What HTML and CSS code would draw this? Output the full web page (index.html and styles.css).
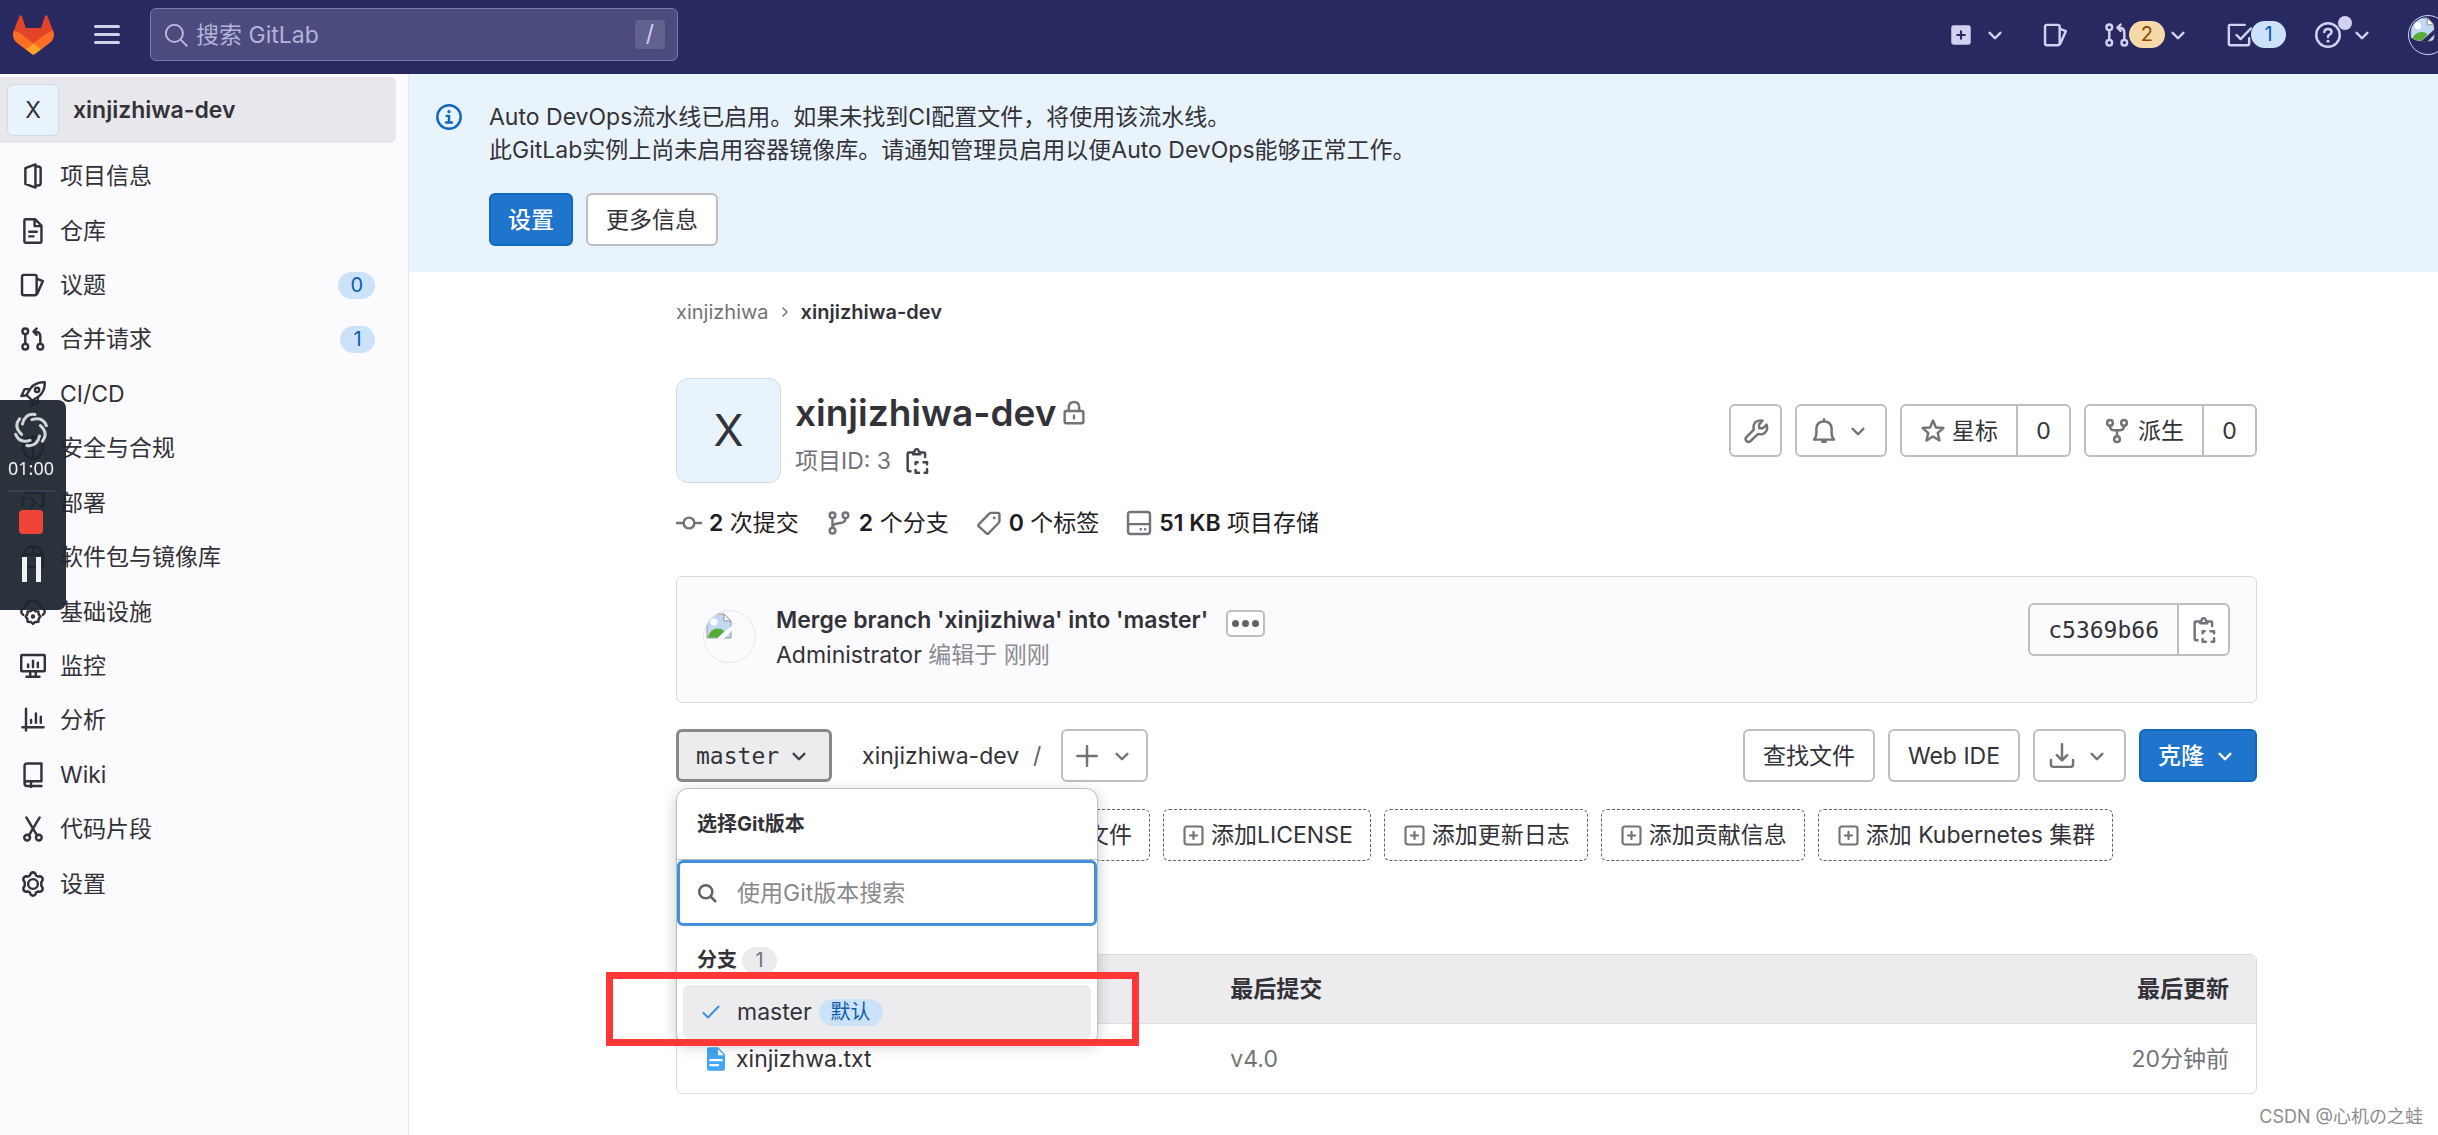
FILE: index.html
```html
<!DOCTYPE html>
<html lang="zh-CN">
<head>
<meta charset="utf-8">
<meta name="viewport" content="width=device-width, initial-scale=1">
<title>xinjizhiwa-dev · GitLab</title>
<link rel="stylesheet" href="styles.css">
</head>
<body>
<svg class="sprite" aria-hidden="true">
  <symbol id="chevron" viewBox="0 0 16 16"><path d="M4.7 6.7 8 10l3.300-3.300"/></symbol>
  <symbol id="chevron-right" viewBox="0 0 16 16"><path d="M6 4l4 4-4 4"/></symbol>
  <symbol id="search" viewBox="0 0 16 16"><circle cx="7" cy="7" r="5.250"/><path d="M11 11l3.600 3.600"/></symbol>
  <symbol id="plus-solid" viewBox="0 0 16 16"><rect x="2" y="2" width="12" height="12" rx="1.500" fill="currentColor" stroke="none"/><path d="M8 5.700v4.600M5.700 8h4.600" stroke="#292961" stroke-width="1.300"/></symbol>
  <symbol id="plus-square" viewBox="0 0 16 16"><rect x="1.750" y="1.750" width="12.500" height="12.500" rx="1.500"/><path d="M8 5.500v5M5.500 8h5"/></symbol>
  <symbol id="plus" viewBox="0 0 16 16"><path d="M8 2v12M2 8h12"/></symbol>
  <symbol id="issues" viewBox="0 0 16 16"><rect x="1.250" y="1.750" width="9" height="12.500" rx="1.200"/><path d="M10.500 4.200l3.600 1.400-3.400 7.600"/></symbol>
  <symbol id="merge" viewBox="0 0 16 16"><circle cx="3.250" cy="3.250" r="1.750"/><circle cx="3.250" cy="12.750" r="1.750"/><circle cx="12.500" cy="12.750" r="1.750"/><path d="M3.250 5v6M12.500 11V6.500q0-3-3-3H8.500M10.200 1.600 8.300 3.500l1.900 1.900"/></symbol>
  <symbol id="todo" viewBox="0 0 16 16"><path d="M11.500 1.750H2.500q-.75 0-.75.75v11q0 .75.75.75h11q.75 0 .75-.75V10M6.500 8l2.500 2.500L15.300 4"/></symbol>
  <symbol id="help" viewBox="0 0 16 16"><circle cx="8" cy="8" r="7.250"/><path d="M5.700 6.200q.3-1.900 2.300-1.900 2.200 0 2.200 1.900 0 1.100-1.200 1.600-1 .4-1 1.500"/><circle cx="8" cy="11.800" r=".9" fill="currentColor" stroke="none"/></symbol>
  <symbol id="project" viewBox="0 0 16 16"><path d="M9.500.9v14.200L3.300 12.900V3.100zM9.500 2.200h1.600q1.600 0 1.600 1.500v8.600q0 1.500-1.600 1.500H9.500"/></symbol>
  <symbol id="doc" viewBox="0 0 16 16"><path d="M3.500.750h5.700l4 4v9.750q0 .75-.75.75h-9q-.75 0-.75-.75V1.500q0-.75.75-.75zM9 1v4h4M5.700 8.500h4.600M5.700 11.300h2.600"/></symbol>
  <symbol id="rocket" viewBox="0 0 16 16"><path d="M15.200.8q-5.700-.3-8.700 3.700L4 8.500 7.500 12l4-2.500q4-3 3.700-8.700zM6 5H2.800L.9 9.300 4 8.800M11 10v3.200L6.700 15.100 7.200 12"/><circle cx="10.500" cy="5.500" r="1.300"/></symbol>
  <symbol id="shield" viewBox="0 0 16 16"><path d="M8 .9 14 3v4.500q0 5-6 7.700-6-2.700-6-7.700V3zM8 1v14"/></symbol>
  <symbol id="deploy" viewBox="0 0 16 16"><path d="M3.500 1.500h9q2 0 2 2V10H12M1.500 10V5H4M7 5.500l2.500 2.500L7 10.500M3 14h10"/></symbol>
  <symbol id="package" viewBox="0 0 16 16"><path d="M1.750 6.500 5 1.750h6l3.250 4.750v6.750q0 1-1 1H2.750q-1 0-1-1zM1.750 6.500h12.500M8 1.750V6.500"/></symbol>
  <symbol id="cloud-gear" viewBox="0 0 16 16"><path d="M2 9.800Q.8 9.200.8 7.800q0-2 2.400-2.500Q4 .9 8 .9t4.800 4.400q2.400.5 2.400 2.500 0 1.400-1.200 2"/><path d="M8 6.200l1.400 1.300 1.900.1.200 1.800 1 1.400-1 1.400-.2 1.800-1.900.1L8 15.300l-1.400-1.200-1.900-.1-.2-1.800-1-1.400 1-1.400.2-1.800 1.900-.1z"/><circle cx="8" cy="10.800" r=".6" fill="currentColor"/></symbol>
  <symbol id="monitor" viewBox="0 0 16 16"><rect x=".75" y="1.250" width="14.500" height="10" rx=".5"/><path d="M6.300 11.500v3M9.700 11.500v3M4 14.600h8M5 7v1.700M8 4.700v4M11 6v2.700"/></symbol>
  <symbol id="chart" viewBox="0 0 16 16"><path d="M3.700 1v13.500M1.500 12.500h13M6.800 8v1.700M9.800 4v5.700M12.800 6v3.700"/></symbol>
  <symbol id="book" viewBox="0 0 16 16"><path d="M4.500.9h8.700v11H4.300q-1.500 0-1.500 1.400 0 1.500 1.500 1.500h8.900M2.800 13.200V2.500q0-1.600 1.700-1.600M6.800 12.500v3"/></symbol>
  <symbol id="scissors" viewBox="0 0 16 16"><circle cx="4.400" cy="13.300" r="1.800"/><circle cx="11.600" cy="13.300" r="1.800"/><path d="M3.900.9l6.600 11M12.100.9l-6.600 11"/></symbol>
  <symbol id="gear" viewBox="0 0 16 16"><path d="M6.600 1.500Q8 .2 9.400 1.500l.5 1.300 1 .6 1.500-.2q1.800.6 1.500 2.500l-.8 1.200v2.200l.8 1.200q.3 1.900-1.500 2.500l-1.500-.2-1 .6-.5 1.300Q8 15.800 6.600 14.500l-.5-1.300-1-.6-1.500.2q-1.800-.6-1.500-2.500l.8-1.200V6.900l-.8-1.200q-.3-1.900 1.500-2.500l1.500.2 1-.6z"/><circle cx="8" cy="8" r="3"/></symbol>
  <symbol id="info" viewBox="0 0 16 16"><circle cx="8" cy="8" r="7.200"/><path d="M6.500 7.300H8v4M6.200 11.400h3.600"/><circle cx="8" cy="4.700" r="1" fill="currentColor" stroke="none"/></symbol>
  <symbol id="lock" viewBox="0 0 16 16"><rect x="2.250" y="6.750" width="11.500" height="7.500" rx="1"/><path d="M4.800 6.500V4.500q0-3.300 3.200-3.300t3.200 3.300v2M8 9.700v1.600"/></symbol>
  <symbol id="copy" viewBox="0 0 16 16"><path d="M4.500 2.750h-1.500q-.75 0-.75.75v10q0 .75.75.75h1M11 2.750h1.250q.75 0 .75.75v2"/><path d="M5.600 3.900V2.500L6.500 2.200q.2-1.500 1.300-1.500t1.300 1.500l.9.300v1.400z"/><path d="M7.150 10V8.750H8.400M12 8.750h2.200V10M14.200 13v2.200h-1.500M9.200 15.200H7.150V13.500"/></symbol>
  <symbol id="commit" viewBox="0 0 16 16"><circle cx="8" cy="8" r="3.300"/><path d="M.5 8h4M11.500 8h4"/></symbol>
  <symbol id="branch" viewBox="0 0 16 16"><circle cx="4" cy="3.250" r="1.750"/><circle cx="12" cy="3.250" r="1.750"/><circle cx="4" cy="12.750" r="1.750"/><path d="M4 5v6M12 5q0 2.500-3 3L6 8.500q-2 .5-2 2.500"/></symbol>
  <symbol id="tag" viewBox="0 0 16 16"><path d="M9.200 1.750h4.300q.9 0 .9.900v4.200q0 .6-.4 1l-6.300 6.500q-.6.6-1.200 0L1.700 10.100q-.6-.6 0-1.200l6.500-6.700q.4-.45 1-.45z"/><circle cx="11.200" cy="4.900" r=".9" fill="currentColor" stroke="none"/></symbol>
  <symbol id="disk" viewBox="0 0 16 16"><rect x="1.250" y="1.250" width="13.500" height="13.500" rx="1.500"/><path d="M1.500 8.700h13M9 11.800h.1M11.700 11.800h.1"/></symbol>
  <symbol id="wrench" viewBox="0 0 16 16"><path d="M10 6.300l2.300 0 2.200-2.200q1.100 3.300-1 5-1.800 1.500-4.200.7l-4.800 4.500q-1.300 1-2.400-.2-1.100-1.200 0-2.300l4.600-4.700Q5.900 4.700 7.400 2.900q1.900-2 4.600-1.200L9.900 3.900z"/></symbol>
  <symbol id="bell" viewBox="0 0 16 16"><path d="M1.800 13.300Q3.300 12 3.300 9V6.500Q3.600 2.200 8 2.200t4.700 4.300V9q0 3 1.500 4.300zM8 .8v1.400M7 14.700h2"/></symbol>
  <symbol id="star" viewBox="0 0 16 16"><path d="M8 1.600l1.800 4.200 4.600.4-3.500 3 1.100 4.600L8 11.400l-4 2.400 1.100-4.600-3.500-3 4.600-.4z"/></symbol>
  <symbol id="fork" viewBox="0 0 16 16"><circle cx="3.700" cy="3" r="1.750"/><circle cx="12.300" cy="3" r="1.750"/><circle cx="8" cy="13" r="1.750"/><path d="M3.700 4.800q0 2.700 2.300 2.700h4q2.300 0 2.300-2.700M8 7.600v3.600"/></symbol>
  <symbol id="download" viewBox="0 0 16 16"><path d="M8 .8v9.700M4.800 7.500 8 10.700l3.200-3.200M1.200 10.500v2.800q0 1.400 1.400 1.400h10.800q1.400 0 1.400-1.400v-2.800"/></symbol>
  <symbol id="check" viewBox="0 0 16 16"><path d="M2.500 8.700l3.300 3.300 7.700-8"/></symbol>
  <symbol id="file" viewBox="0 0 16 16"><path d="M2 1.500Q2 .2 3.300.2H9.500L14 5v9.500q0 1.300-1.300 1.300H3.300Q2 15.800 2 14.500z" fill="#42a5f5" stroke="none"/><path d="M9.300 1.300v4.200h4" fill="#fff" stroke="none"/><path d="M4.200 8.800h7.600M4.200 12h5.300" stroke="#fff"/></symbol>
  <symbol id="broken" viewBox="0 0 26 26"><path d="M1 1h17l7 7v17H1z" fill="#c3d9f3" stroke="#9a9a9a"/><path d="M18 1v7h7z" fill="#fff" stroke="#8f8f8f"/><circle cx="8" cy="9" r="3.500" fill="#fff" stroke="none"/><path d="M2 24.500q2-9 10-9 5 0 6 3l-6 6z" fill="#57ab36" stroke="none"/><path d="M11 25.800 26 12.500v5L18 25.800z" fill="var(--gap)" stroke="none"/></symbol>
</svg>

<header class="topbar">
  <a class="brand" href="#" aria-label="GitLab">
    <svg viewBox="0 0 25 24"><path d="m24.507 9.500-.034-.09L21.082.562a.896.896 0 0 0-1.694.091l-2.290 7.010H7.825L5.535.653a.898.898 0 0 0-1.694-.09L.451 9.411.416 9.500a6.297 6.297 0 0 0 2.090 7.278l.012.010.030.022 5.160 3.867 2.560 1.935 1.554 1.176a1.051 1.051 0 0 0 1.268 0l1.555-1.176 2.560-1.935 5.197-3.890.014-.010A6.297 6.297 0 0 0 24.507 9.500Z" fill="#e24329"/><path d="m24.507 9.500-.034-.09a11.440 11.440 0 0 0-4.560 2.051l-7.447 5.632 4.742 3.584 5.197-3.890.014-.010A6.297 6.297 0 0 0 24.507 9.500Z" fill="#fc6d26"/><path d="m7.707 20.677 2.560 1.935 1.555 1.176a1.051 1.051 0 0 0 1.268 0l1.555-1.176 2.560-1.935-4.743-3.584-4.755 3.584Z" fill="#fca326"/><path d="M5.010 11.461a11.430 11.430 0 0 0-4.560-2.050L.416 9.500a6.297 6.297 0 0 0 2.090 7.278l.012.010.030.022 5.160 3.867 4.745-3.584-7.444-5.632Z" fill="#fc6d26"/></svg>
  </a>
  <button class="burger" aria-label="菜单"><span></span><span></span><span></span></button>
  <div class="global-search">
    <svg class="icon"><use href="#search"/></svg>
    <input type="text" placeholder="搜索 GitLab" aria-label="搜索 GitLab">
    <kbd>/</kbd>
  </div>
  <nav class="top-actions" aria-label="快捷入口">
    <button class="top-btn spaced" aria-label="新建"><svg class="icon"><use href="#plus-solid"/></svg><svg class="icon"><use href="#chevron"/></svg></button>
    <a class="top-btn" href="#" aria-label="议题"><svg class="icon"><use href="#issues"/></svg></a>
    <button class="top-btn" aria-label="合并请求"><svg class="icon"><use href="#merge"/></svg><span class="badge warn">2</span><svg class="icon"><use href="#chevron"/></svg></button>
    <a class="top-btn" href="#" aria-label="待办事项"><svg class="icon"><use href="#todo"/></svg><span class="badge">1</span></a>
    <button class="top-btn spaced help" aria-label="帮助"><svg class="icon"><use href="#help"/></svg><i class="dot"></i><svg class="icon"><use href="#chevron"/></svg></button>
    <a class="me" href="#" aria-label="用户"><svg class="avatar-broken"><use href="#broken"/></svg></a>
  </nav>
</header>

<div class="layout">
  <aside class="sidebar">
    <a class="side-project" href="#"><span class="tile">X</span>xinjizhiwa-dev</a>
    <nav aria-label="项目导航">
      <ul class="side-list">
        <li><a href="#"><svg class="icon"><use href="#project"/></svg>项目信息</a></li>
        <li><a href="#"><svg class="icon"><use href="#doc"/></svg>仓库</a></li>
        <li><a href="#"><svg class="icon"><use href="#issues"/></svg>议题<span class="badge">0</span></a></li>
        <li><a href="#"><svg class="icon"><use href="#merge"/></svg>合并请求<span class="badge">1</span></a></li>
        <li><a href="#"><svg class="icon"><use href="#rocket"/></svg>CI/CD</a></li>
        <li><a href="#"><svg class="icon"><use href="#shield"/></svg>安全与合规</a></li>
        <li><a href="#"><svg class="icon"><use href="#deploy"/></svg>部署</a></li>
        <li><a href="#"><svg class="icon"><use href="#package"/></svg>软件包与镜像库</a></li>
        <li><a href="#"><svg class="icon"><use href="#cloud-gear"/></svg>基础设施</a></li>
        <li><a href="#"><svg class="icon"><use href="#monitor"/></svg>监控</a></li>
        <li><a href="#"><svg class="icon"><use href="#chart"/></svg>分析</a></li>
        <li><a href="#"><svg class="icon"><use href="#book"/></svg>Wiki</a></li>
        <li><a href="#"><svg class="icon"><use href="#scissors"/></svg>代码片段</a></li>
        <li><a href="#"><svg class="icon"><use href="#gear"/></svg>设置</a></li>
      </ul>
    </nav>
  </aside>

  <main class="main">
    <section class="alert">
      <svg class="icon"><use href="#info"/></svg>
      <div>
        <p>Auto DevOps流水线已启用。如果未找到CI配置文件，将使用该流水线。<br>此GitLab实例上尚未启用容器镜像库。请通知管理员启用以便Auto DevOps能够正常工作。</p>
        <div class="row">
          <button class="btn primary">设置</button>
          <button class="btn">更多信息</button>
        </div>
      </div>
    </section>

    <div class="content">
      <nav class="crumbs" aria-label="面包屑"><a href="#">xinjizhiwa</a><svg class="icon"><use href="#chevron-right"/></svg><a class="current" href="#">xinjizhiwa-dev</a></nav>

      <div class="project-head">
        <span class="project-tile">X</span>
        <div class="project-name">
          <h1>xinjizhiwa-dev <svg class="icon"><use href="#lock"/></svg></h1>
          <p>项目ID: 3 <button class="bare" aria-label="复制项目ID"><svg class="icon"><use href="#copy"/></svg></button></p>
        </div>
        <div class="row project-actions">
          <button class="btn square" aria-label="管理"><svg class="icon"><use href="#wrench"/></svg></button>
          <button class="btn notify" aria-label="通知"><svg class="icon"><use href="#bell"/></svg><svg class="icon"><use href="#chevron"/></svg></button>
          <div class="group"><button class="btn"><svg class="icon"><use href="#star"/></svg>星标</button><a class="btn count" href="#">0</a></div>
          <div class="group"><button class="btn fork"><svg class="icon"><use href="#fork"/></svg>派生</button><a class="btn count" href="#">0</a></div>
        </div>
      </div>

      <nav class="stats" aria-label="统计">
        <a href="#"><svg class="icon"><use href="#commit"/></svg><span><b>2</b> 次提交</span></a>
        <a href="#"><svg class="icon"><use href="#branch"/></svg><span><b>2</b> 个分支</span></a>
        <a href="#"><svg class="icon"><use href="#tag"/></svg><span><b>0</b> 个标签</span></a>
        <a href="#"><svg class="icon"><use href="#disk"/></svg><span><b>51 KB</b> 项目存储</span></a>
      </nav>

      <section class="commit">
        <span class="commit-avatar"><svg><use href="#broken"/></svg></span>
        <div class="commit-text">
          <div class="row"><a class="commit-title" href="#">Merge branch 'xinjizhiwa' into 'master'</a><button class="more" aria-label="展开提交描述"><i></i><i></i><i></i></button></div>
          <p><a href="#">Administrator</a> 编辑于 刚刚</p>
        </div>
        <div class="group sha"><span class="btn mono">c5369b66</span><button class="btn" aria-label="复制提交SHA"><svg class="icon"><use href="#copy"/></svg></button></div>
      </section>

      <div class="tree-bar">
        <div class="ref-picker">
          <button class="btn mono ref-btn" aria-expanded="true">master<svg class="icon"><use href="#chevron"/></svg></button>
          <div class="menu">
            <h2>选择Git版本</h2>
            <div class="menu-search">
              <svg class="icon"><use href="#search"/></svg>
              <input type="text" placeholder="使用Git版本搜索" aria-label="使用Git版本搜索">
            </div>
            <h3>分支<span class="badge muted">1</span></h3>
            <button class="menu-item"><svg class="icon"><use href="#check"/></svg>master<span class="badge">默认</span></button>
            <div class="marker"></div>
          </div>
        </div>
        <div class="path"><a href="#">xinjizhiwa-dev</a><span>/</span></div>
        <button class="btn add" aria-label="添加"><svg class="icon"><use href="#plus"/></svg><svg class="icon"><use href="#chevron"/></svg></button>
        <div class="row tree-actions">
          <button class="btn">查找文件</button>
          <button class="btn">Web IDE</button>
          <button class="btn down" aria-label="下载"><svg class="icon"><use href="#download"/></svg><svg class="icon"><use href="#chevron"/></svg></button>
          <button class="btn primary clone">克隆<svg class="icon"><use href="#chevron"/></svg></button>
        </div>
      </div>

      <div class="row suggestions">
        <a class="btn dashed" href="#"><svg class="icon"><use href="#plus-square"/></svg>添加自述文件</a>
        <a class="btn dashed" href="#"><svg class="icon"><use href="#plus-square"/></svg>添加LICENSE</a>
        <a class="btn dashed" href="#"><svg class="icon"><use href="#plus-square"/></svg>添加更新日志</a>
        <a class="btn dashed" href="#"><svg class="icon"><use href="#plus-square"/></svg>添加贡献信息</a>
        <a class="btn dashed" href="#"><svg class="icon"><use href="#plus-square"/></svg>添加 Kubernetes 集群</a>
      </div>

      <table class="files">
        <thead><tr><th scope="col" aria-label="名称"></th><th scope="col">最后提交</th><th scope="col">最后更新</th></tr></thead>
        <tbody><tr><td><a href="#"><svg class="icon"><use href="#file"/></svg>xinjizhwa.txt</a></td><td>v4.0</td><td>20分钟前</td></tr></tbody>
      </table>
    </div>
  </main>
</div>

<aside class="recorder" aria-label="录屏">
  <svg class="swirl" viewBox="0 0 36 36"><path d="M22 2.500Q12 1 9.500 12"/><path d="M22 2.500Q12 1 9.500 12" transform="rotate(60 18 18)"/><path d="M22 2.500Q12 1 9.500 12" transform="rotate(120 18 18)"/><path d="M22 2.500Q12 1 9.500 12" transform="rotate(180 18 18)"/><path d="M22 2.500Q12 1 9.500 12" transform="rotate(240 18 18)"/><path d="M22 2.500Q12 1 9.500 12" transform="rotate(300 18 18)"/></svg>
  <time>01:00</time>
  <button class="stop" aria-label="停止"></button>
  <button class="pause" aria-label="暂停"></button>
</aside>
<div class="watermark">CSDN @心机の之蛙</div>
</body>
</html>
```
FILE: styles.css
```css
* { box-sizing: border-box; }

body {
  margin: 0;
  min-height: 100vh;
  display: flex;
  flex-direction: column;
  position: relative;
  overflow-x: hidden;
  background: #fff;
  color: #333238;
  font: 400 23px/34px Inter, "Noto Sans CJK SC", sans-serif;
}

a { color: inherit; text-decoration: none; }
p, h1, h2, h3, ul { margin: 0; padding: 0; }
button, input { font: inherit; color: inherit; }
button { cursor: pointer; }
i { font-style: normal; }
b { font-weight: 600; }

.sprite { position: absolute; width: 0; height: 0; }

.icon {
  width: 26px;
  height: 26px;
  flex: none;
  fill: none;
  stroke: currentColor;
  stroke-width: 1.5;
  stroke-linecap: round;
  stroke-linejoin: round;
}

.row { display: flex; align-items: center; gap: 13px; }

.badge {
  min-width: 35px;
  padding: 0 12px;
  border-radius: 14px;
  background: #cbe2f9;
  color: #0b5cad;
  font-size: 20px;
  line-height: 27px;
  text-align: center;
}
.badge.warn { background: #f5d9a8; color: #8f4700; }
.badge.muted { background: #ececef; color: #737278; font-weight: 400; }

/* Top bar */
.topbar {
  display: flex;
  align-items: center;
  height: 74px;
  padding: 0 0 5px 13px;
  background: #292961;
  color: #d1d1f0;
}
.brand { display: flex; }
.brand svg { width: 41px; height: 40px; }
.burger {
  display: flex;
  flex-direction: column;
  gap: 5px;
  width: 26px;
  margin: 0 30px 0 40px;
  padding: 0;
  border: 0;
  background: none;
}
.burger span { height: 3px; border-radius: 2px; background: #d1d1f0; }
.global-search {
  display: flex;
  align-items: center;
  gap: 7px;
  width: 528px;
  height: 53px;
  padding: 0 12px;
  border: 1px solid #7979a8;
  border-radius: 6px;
  background: #4b4b7e;
}
.global-search .icon { color: #b8b8dc; stroke-width: 1.2; }
.global-search input {
  flex: 1;
  min-width: 0;
  padding: 0;
  border: 0;
  outline: 0;
  background: none;
}
.global-search input::placeholder { color: #b4b4d8; opacity: 1; }
.global-search kbd {
  width: 30px;
  border-radius: 4px;
  background: #62628f;
  font: inherit;
  line-height: 29px;
  text-align: center;
}
.top-actions { display: flex; align-items: center; gap: 35px; margin-left: auto; }
.top-btn {
  display: flex;
  align-items: center;
  padding: 0;
  border: 0;
  background: none;
}
.top-btn.spaced { gap: 8px; }
.top-btn .badge { margin-left: -1px; }
.help { position: relative; margin-left: -6px; }
.dot {
  position: absolute;
  left: 22px;
  top: -7px;
  width: 16px;
  height: 16px;
  border: 1px solid #292961;
  border-radius: 50%;
  background: #d1d1f0;
}
.me {
  --gap: #292961;
  width: 30px;
  height: 40px;
  margin-left: -2px;
  overflow: hidden;
}
.avatar-broken {
  width: 40px;
  height: 40px;
  padding: 1px 12px 12px 1px;
  border: 1px solid #d1d1f0;
  border-radius: 50%;
}

/* Sidebar */
.layout { display: flex; flex: 1; }
.sidebar {
  flex: none;
  width: 409px;
  padding-top: 3px;
  border-right: 1px solid #e6e5eb;
  background: #fbfafd;
}
.side-project {
  display: flex;
  align-items: center;
  gap: 14px;
  height: 66px;
  margin: 0 12px 6px 0;
  padding-left: 7px;
  border-radius: 0 6px 6px 0;
  background: #e8e7ec;
  font-weight: 600;
}
.tile {
  width: 52px;
  border: 1px solid #d0dbe6;
  border-radius: 6px;
  background: #e9f3fc;
  font-weight: 400;
  line-height: 50px;
  text-align: center;
}
.side-list {
  display: grid;
  grid-auto-rows: 1fr;
  min-height: 762px;
  list-style: none;
}
.side-list li { display: grid; }
.side-list a {
  display: flex;
  align-items: center;
  gap: 14px;
  padding: 0 33px 0 20px;
}
.side-list .badge { margin-left: auto; }

/* Alert */
.main { flex: 1; min-width: 0; }
.alert {
  display: flex;
  gap: 27px;
  padding: 27px 27px 26px;
  background: #e9f3fc;
}
.alert > .icon { margin-top: 3px; color: #1068bf; }
.alert p { margin-bottom: 26px; line-height: 33px; }

/* Buttons */
.btn {
  display: inline-flex;
  align-items: center;
  justify-content: center;
  gap: 6px;
  height: 53px;
  padding: 0 18px;
  border: 2px solid #bfbfc3;
  border-radius: 6px;
  background: #fff;
  white-space: nowrap;
}
.btn .icon { color: #737278; }
.btn.primary { padding: 0 17px; border-color: #1068bf; background: #1f75cb; color: #fff; font-weight: 500; }
.btn.primary .icon { color: #fff; }
.btn.square { width: 53px; padding: 0; }
.mono { font-family: "DejaVu Sans Mono", monospace; }
.group { display: flex; }
.group .btn:first-child { border-radius: 6px 0 0 6px; }
.group .btn:last-child { margin-left: -2px; border-radius: 0 6px 6px 0; }
.group .fork { gap: 8px; }
.bare { padding: 0; border: 0; background: none; }

/* Project header */
.content { padding: 26px 181px 41px 267px; }
.crumbs {
  display: flex;
  align-items: center;
  gap: 8px;
  font-size: 20px;
  line-height: 28px;
  color: #737278;
}
.crumbs .icon { width: 16px; height: 16px; }
.crumbs .current { color: #333238; font-weight: 600; }
.project-head { display: flex; align-items: center; gap: 14px; margin-top: 52px; }
.project-tile {
  width: 105px;
  border: 1px solid #d0dbe6;
  border-radius: 12px;
  background: #e9f3fc;
  font-size: 44px;
  line-height: 103px;
  text-align: center;
}
.project-name { padding-top: 6px; }
.project-name h1 {
  display: flex;
  align-items: center;
  gap: 5px;
  font-size: 37px;
  font-weight: 600;
  line-height: 48px;
}
.project-name .icon { color: #737278; }
.project-name p { display: flex; align-items: center; gap: 13px; margin-top: 7px; color: #737278; }
.bare .icon { display: block; color: #434248; }
.project-actions { margin-left: auto; }
.notify { width: 92px; gap: 8px; padding: 0; }
.group .count { width: 55px; padding: 0; }
.stats { display: flex; gap: 27px; margin-top: 23px; color: #1f1e24; }
.stats a { display: flex; align-items: center; gap: 7px; }
.stats .icon { color: #737278; }

/* Last commit */
.commit {
  display: flex;
  align-items: flex-start;
  gap: 20px;
  min-height: 127px;
  margin-top: 36px;
  padding: 26px;
  border: 1px solid #dcdcde;
  border-radius: 6px;
  background: #fbfafd;
}
.commit-avatar {
  --gap: #fbfafd;
  width: 53px;
  height: 53px;
  margin-top: 7px;
  padding: 2px;
  border: 1px solid #e6e5eb;
  border-radius: 50%;
  overflow: hidden;
}
.commit-avatar svg { display: block; width: 26px; height: 26px; }
.commit-text { flex: 1; color: #8c8b91; }
.commit-text p { margin-top: 1px; }
.commit-text a { color: #333238; }
.commit-text .commit-title { font-weight: 600; }
.commit-text .row { gap: 18px; align-items: flex-end; }
.more {
  display: flex;
  align-items: center;
  justify-content: center;
  gap: 3px;
  width: 39px;
  height: 27px;
  padding: 0;
  border: 2px solid #bfbfc3;
  border-radius: 5px;
  background: #fff;
}
.more i { width: 7px; height: 7px; border-radius: 50%; background: #626168; }
.sha .mono { background: #fbfafd; }
.sha button { width: 53px; padding: 0; }

/* Branch row */
.tree-bar { display: flex; align-items: center; margin-top: 26px; }
.ref-picker { position: relative; }
.ref-btn {
  gap: 7px;
  padding: 0 17px;
  border: 3px solid #89888d;
  background: #ececef;
}
.ref-btn .icon { color: #434248; }
.path { display: flex; gap: 14px; margin: 0 20px 0 30px; }
.path span { color: #626168; }
.btn.add, .btn.down { width: 93px; gap: 9px; padding: 0; }
.btn.add { width: 87px; }
.tree-actions { margin-left: auto; }
.btn.clone { gap: 8px; }

.menu {
  position: absolute;
  z-index: 2;
  top: 59px;
  left: 0;
  width: 422px;
  padding-bottom: 2px;
  border: 1px solid #bfbfc3;
  border-radius: 12px 12px 8px 8px;
  background: #fff;
  box-shadow: 0 4px 14px rgba(31, 30, 36, .24);
}
.menu h2, .menu h3 { padding: 0 20px; font-size: 20px; font-weight: 700; }
.menu h2 { line-height: 70px; border-bottom: 1px solid #bfbfc3; }
.menu h3 { display: flex; align-items: center; gap: 5px; margin: 17px 0 8px; }
.menu-search {
  display: flex;
  align-items: center;
  gap: 20px;
  height: 66px;
  padding: 0 17px;
  border: 3px solid #428fdc;
  border-radius: 6px;
}
.menu-search .icon { width: 20px; height: 20px; color: #626168; stroke-width: 2; }
.menu-search input { flex: 1; min-width: 0; padding: 0; border: 0; outline: 0; background: none; }
.menu-search input::placeholder { color: #89888d; opacity: 1; }
.menu-item {
  display: flex;
  align-items: center;
  width: 408px;
  height: 54px;
  margin: 0 6px;
  padding: 0 17px;
  border: 0;
  border-radius: 6px;
  background: #ececef;
}
.menu-item .icon { width: 22px; height: 22px; margin-right: 15px; color: #428fdc; }
.menu-item .badge { margin-left: 7px; }
.marker {
  position: absolute;
  left: -71px;
  bottom: -5px;
  width: 533px;
  height: 74px;
  border: 7px solid #ff3737;
  pointer-events: none;
}

/* Suggested files */
.suggestions { margin-top: 27px; padding-left: 270px; }
.dashed { height: 52px; border: 1px dashed #626168; padding: 0 17px 0 18px; }
.dashed .icon { width: 23px; height: 23px; }

/* File table */
.files {
  width: 100%;
  margin-top: 93px;
  table-layout: fixed;
  border: 1px solid #dcdcde;
  border-radius: 6px;
  border-spacing: 0;
  overflow: hidden;
}
.files th, .files td { height: 69px; padding: 0 27px; text-align: left; }
.files th { border-bottom: 1px solid #dcdcde; background: #ececef; font-weight: 700; }
.files td { color: #737278; }
.files td a { display: flex; align-items: center; gap: 8px; color: #333238; }
.files .icon { width: 24px; height: 24px; }
.files th:last-child, .files td:last-child { text-align: right; }

/* Floating recorder */
.recorder {
  position: fixed;
  z-index: 3;
  left: 0;
  top: 400px;
  display: flex;
  flex-direction: column;
  align-items: center;
  width: 66px;
  height: 210px;
  padding: 12px 4px 0 0;
  border-radius: 0 8px 8px 0;
  background: rgba(29, 37, 48, .94);
  color: #f2f2f2;
}
.swirl { width: 36px; height: 36px; fill: none; stroke: #d6d6d6; stroke-width: 3; stroke-linecap: round; }
.recorder time {
  width: 48px;
  padding: 4px 0 6px;
  border-bottom: 2px solid #36414f;
  font: 18px/32px "Noto Sans", sans-serif;
  text-align: center;
}
.stop { width: 24px; height: 24px; margin: 18px 0 23px; padding: 0; border: 0; border-radius: 4px; background: #f04438; }
.pause { width: 19px; height: 25px; padding: 0; border: solid #f2f2f2; border-width: 0 5px; background: none; }

.watermark {
  position: absolute;
  right: 15px;
  bottom: 4px;
  color: #8d8d8d;
  font-size: 18px;
  line-height: 28px;
}
```
